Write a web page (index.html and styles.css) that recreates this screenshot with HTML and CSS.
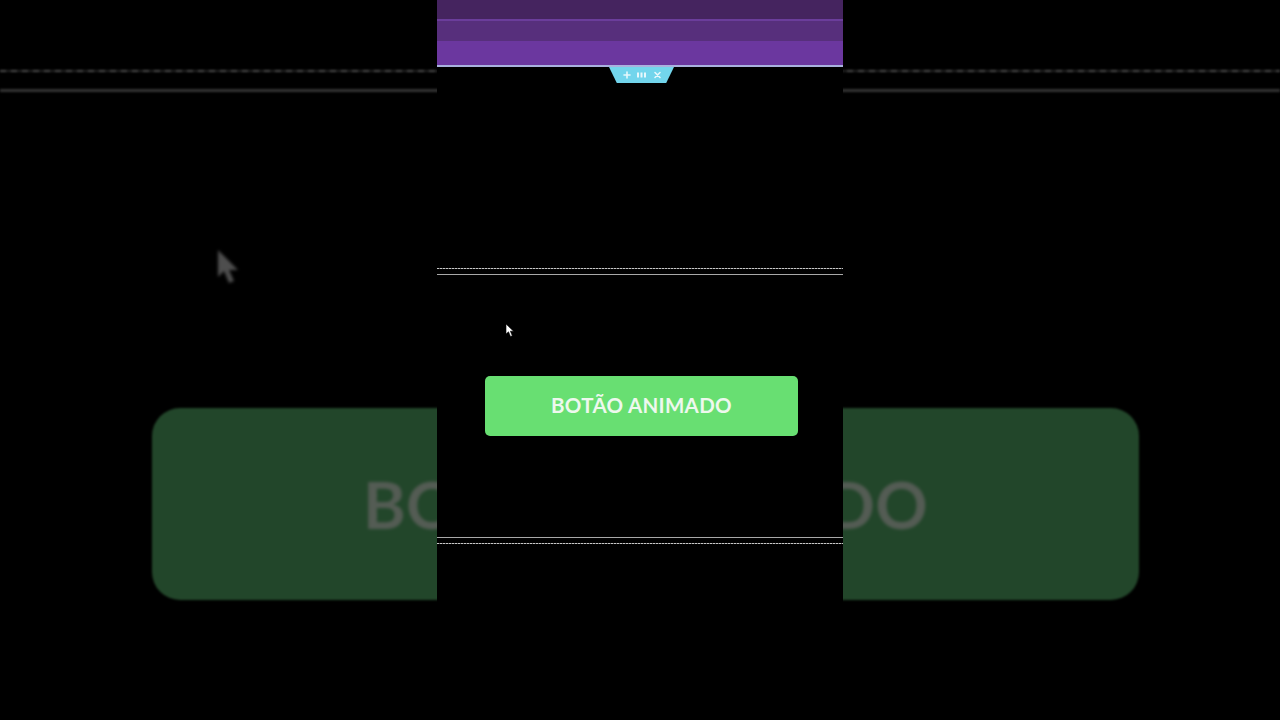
FILE: index.html
```html
<!DOCTYPE html>
<html lang="pt">
<head>
<meta charset="utf-8">
<title>Botão animado</title>
<link rel="stylesheet" href="styles.css">
</head>
<body>
<div class="stage">
  <div class="backdrop">
    <div class="bg-dash"></div>
    <div class="bg-solid"></div>
    <div class="bg-button"><span>BOTÃO ANIMADO</span></div>
    <svg class="bg-cursor" width="26" height="38" viewBox="0 0 26 38">
      <path d="M2 1 L2 28 L8 22 L13 34 L18 32 L13 21 L22 21 Z" fill="#4e4e4e"/>
    </svg>
  </div>
  <div class="video">
    <div class="stripe s1"></div>
    <div class="stripe s2"></div>
    <div class="stripe s3"></div>
    <div class="stripe s4"></div>
    <div class="stripe s5"></div>
    <div class="tab">
      <svg width="65" height="16" viewBox="0 0 65 16">
        <path d="M15 8 h6 M18 5 v6" stroke="#e6f8fc" stroke-width="1.6" stroke-linecap="round"/>
        <g fill="#e6f8fc">
          <rect x="28" y="5.5" width="2" height="5"/>
          <rect x="31.5" y="5.5" width="2" height="5"/>
          <rect x="35" y="5.5" width="2" height="5"/>
        </g>
        <path d="M46 5.5 l5 5 M51 5.5 l-5 5" stroke="#e6f8fc" stroke-width="1.6" stroke-linecap="round"/>
      </svg>
    </div>
    <div class="line-dash top-dash"></div>
    <div class="line-solid"></div>
    <button class="cta">BOTÃO ANIMADO</button>
    <div class="line-solid bottom-solid"></div>
    <div class="line-dash"></div>
    <svg class="cursor" width="10" height="15" viewBox="0 0 10 15">
      <path d="M1 1 L1 11 L3.5 8.8 L5.5 13.5 L7.3 12.7 L5.4 8.2 L8.6 8.2 Z" fill="#fff" stroke="#000" stroke-width="0.6"/>
    </svg>
  </div>
</div>
</body>
</html>
```
FILE: styles.css
```css
* { box-sizing: border-box; }
html, body { margin: 0; padding: 0; background: #000; }
body { width: 1280px; height: 720px; overflow: hidden; font-family: Lato, "Noto Sans", sans-serif; }

.stage {
  position: relative;
  width: 1280px;
  height: 720px;
  display: flex;
  justify-content: center;
  background: #000;
  overflow: hidden;
}

.backdrop {
  position: absolute;
  inset: 0;
  display: flex;
  flex-direction: column;
  filter: blur(0.8px);
}
.bg-dash {
  margin-top: 70px;
  height: 2px;
  background: repeating-linear-gradient(90deg, #4a4a4a 0 6px, #222 6px 11px);
}
.bg-solid {
  margin-top: 17px;
  height: 3px;
  background: #333;
}
.bg-button {
  margin-top: 316px;
  margin-left: 152px;
  width: 987px;
  height: 192px;
  border-radius: 28px;
  background: #22462a;
  display: flex;
  align-items: center;
  justify-content: center;
  padding-bottom: 1px;
}
.bg-button span {
  font-family: Lato, "Noto Sans", sans-serif;
  font-weight: 700;
  font-size: 65px;
  color: #545c54;
  letter-spacing: 0.3px;
  filter: blur(1px);
}
.bg-cursor {
  position: absolute;
  left: 216px;
  top: 249px;
  filter: blur(1.2px);
}

.video {
  position: relative;
  width: 406px;
  height: 720px;
  background: #000;
  display: flex;
  flex-direction: column;
  z-index: 1;
}
.stripe { width: 100%; }
.s1 { height: 19px; background: #45245f; }
.s2 { height: 2px; background: #6b3d9b; }
.s3 { height: 20px; background: #572f7c; }
.s4 { height: 24px; background: #6b379f; }
.s5 { height: 2px; background: #a9b1de; }

.tab {
  align-self: center;
  margin-left: 3px;
  width: 65px;
  height: 16px;
  background: #72d5ec;
  clip-path: polygon(0 0, 100% 0, 88% 100%, 12% 100%);
  display: flex;
}

.line-dash {
  height: 1px;
  background: repeating-linear-gradient(90deg, #c8c8c8 0 2px, #555 2px 3px);
}
.top-dash { margin-top: 185px; }
.line-solid {
  margin-top: 5px;
  height: 1px;
  background: #a8a8a8;
}
.bottom-solid { margin-top: 101px; margin-bottom: 5px; }

.cta {
  margin: 101px 0 0 48px;
  width: 313px;
  height: 60px;
  border: 0;
  border-radius: 5px;
  background: #68df72;
  color: #eef8ee;
  font-family: Lato, "Noto Sans", sans-serif;
  font-weight: 700;
  font-size: 20.5px;
  letter-spacing: 0.3px;
  padding: 0 0 3px 0;
  cursor: default;
}

.cursor {
  position: absolute;
  left: 68px;
  top: 323px;
}
```
